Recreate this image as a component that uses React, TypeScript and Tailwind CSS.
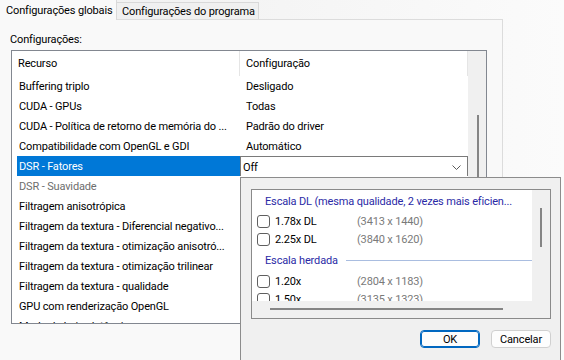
import React from "react";

const rows: [string, string, string?][] = [
  ["Buffering triplo", "Desligado"],
  ["CUDA - GPUs", "Todas"],
  ["CUDA - Política de retorno de memória do ...", "Padrão do driver"],
  ["Compatibilidade com OpenGL e GDI", "Automático"],
  ["DSR - Fatores", "Off", "sel"],
  ["DSR - Suavidade", "", "dis"],
  ["Filtragem anisotrópica", ""],
  ["Filtragem da textura - Diferencial negativo...", ""],
  ["Filtragem da textura - otimização anisotró...", ""],
  ["Filtragem da textura - otimização trilinear", ""],
  ["Filtragem da textura - qualidade", ""],
  ["GPU com renderização OpenGL", ""],
  ["Modo de baixa latência", ""],
];

function Check() {
  return <div className="ml-[5px] w-[13px] h-[13px] border border-[#5f5f5f] rounded-[3px] bg-white shrink-0" />;
}

function Item({ label, res }: { label: string; res: string }) {
  return (
    <div className="h-[18px] shrink-0 flex items-center whitespace-nowrap">
      <Check />
      <div className="ml-[5px] w-[82px] pt-[1px]">{label}</div>
      <div className="text-[#7a7a7a] pt-[1px]">{res}</div>
    </div>
  );
}

export default function App() {
  return (
    <div className="w-[564px] h-[360px] overflow-hidden relative bg-gradient-to-r from-[#efefef] to-[#fbfbfb] text-[11px] tracking-[-0.15px] text-black font-['Roboto',sans-serif] leading-none">
      <div className="flex h-[19px] items-end">
        <div className="h-[20px] w-[117px] bg-[#f9f9f9] border-r border-[#d9d9d9] pl-[6px] pt-[1px] flex items-center relative z-10 -mb-px whitespace-nowrap">
          Configurações globais
        </div>
        <div className="h-[17px] bg-[#f0f0f0] border-t border-r border-[#d9d9d9] pl-[5px] pr-[3px] pt-[1px] flex items-center whitespace-nowrap">
          Configurações do programa
        </div>
      </div>
      <div className="w-[503px] h-[341px] bg-[#f9f9f9] border-t border-r border-[#dcdcdc] pt-[8px] pl-[10px]">
        <div className="h-[22px] flex items-center">Configurações:</div>
        <div className="ml-px w-[476px] h-[274px] border border-[#828790] bg-white flex">
          <div className="w-[456px] flex flex-col overflow-hidden">
            <div className="h-[25px] shrink-0 flex border-r border-[#e5e5e5]">
              <div className="w-[228px] pl-[6px] flex items-center border-r border-[#e5e5e5]">Recurso</div>
              <div className="pl-[6px] flex items-center">Configuração</div>
            </div>
            {rows.map(([a, b, k]) => (
              <div key={a} className="h-[20px] shrink-0 flex">
                <div className="w-[228px] pl-[5px] flex">
                  <div
                    className={
                      "flex-1 pl-[2px] pt-[1px] flex items-center whitespace-nowrap overflow-hidden " +
                      (k === "sel" ? "bg-[#0078d7] text-white" : k === "dis" ? "text-[#6d6d6d]" : "")
                    }
                  >
                    {a}
                  </div>
                </div>
                {k === "sel" ? (
                  <div className="w-[228px] border-t border-l border-r border-[#7a7a7a] bg-white flex items-center pl-[2px] pr-[6px]">
                    <div className="flex-1 pt-[1px]">{b}</div>
                    <svg width="9" height="5" viewBox="0 0 9 5" className="mt-[1px]">
                      <polyline points="0.5,0.5 4.5,4.5 8.5,0.5" fill="none" stroke="#5a5a5a" strokeWidth="1" />
                    </svg>
                  </div>
                ) : (
                  <div className="w-[228px] pl-[6px] pt-[1px] flex items-center whitespace-nowrap overflow-hidden">{b}</div>
                )}
              </div>
            ))}
          </div>
          <div className="w-[18px] bg-[#f0f0f0] pt-[64px]">
            <div className="ml-[9px] w-[2px] h-[200px] bg-[#858585]" />
          </div>
        </div>
      </div>

      <div className="absolute left-[240px] top-[177px] w-[321px] h-[200px] border border-[#8c8c8c] bg-[#f0f0f0] pl-[10px] pr-[9px] pt-[11px]">
        <div className="w-[300px] h-[130px] border border-[#8a8a8a] flex flex-col">
          <div className="flex h-[111px]">
            <div className="w-[280px] bg-white flex flex-col overflow-hidden">
              <div className="h-[22px] shrink-0 pl-[13px] pt-[1px] flex items-center whitespace-nowrap overflow-hidden text-[#2a2aa6]">
                Escala DL (mesma qualidade, 2 vezes mais eficien...
              </div>
              <Item label="1.78x DL" res="(3413 x 1440)" />
              <Item label="2.25x DL" res="(3840 x 1620)" />
              <div className="h-[24px] shrink-0 pl-[13px] pt-[1px] flex items-center whitespace-nowrap text-[#2a2aa6]">
                <span>Escala herdada</span>
                <div className="flex-1 h-px bg-[#a9bde0] ml-[8px]" />
              </div>
              <Item label="1.20x" res="(2804 x 1183)" />
              <Item label="1.50x" res="(3135 x 1323)" />
            </div>
            <div className="w-[18px] bg-[#f0f0f0] pt-[18px]">
              <div className="ml-[8px] w-[2px] h-[39px] bg-[#858585]" />
            </div>
          </div>
          <div className="h-[17px] bg-[#f0f0f0] pt-[7px] pl-[18px]">
            <div className="w-[233px] h-[2px] bg-[#858585]" />
          </div>
        </div>
        <div className="w-[300px] mt-[11px] flex justify-end gap-[11px]">
          <div className="w-[60px] h-[18px] border border-[#0067c0] outline outline-1 outline-[#0067c0] -outline-offset-2 rounded-[4px] bg-[#fdfdfd] flex items-center justify-center pt-[1px]">
            OK
          </div>
          <div className="w-[60px] h-[18px] border border-[#d0d0d0] rounded-[4px] bg-[#fdfdfd] flex items-center justify-center pt-[1px]">
            Cancelar
          </div>
        </div>
      </div>
    </div>
  );
}
